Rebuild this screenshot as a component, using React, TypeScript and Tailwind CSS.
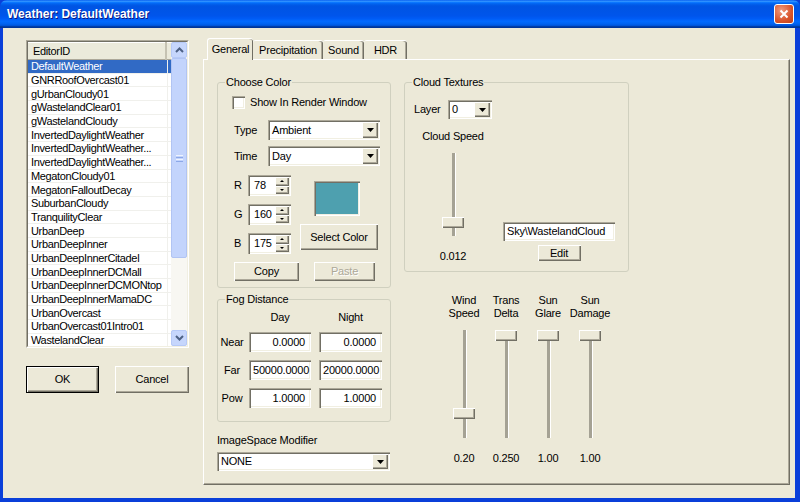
import React from "react";

const raised =
  "bg-[#ECE9D8] shadow-[inset_1px_1px_0_#fff,inset_-1px_-1px_0_#716F64,inset_-2px_-2px_0_#ACA899]";
const sunken =
  "shadow-[inset_1px_1px_0_#ACA899,inset_2px_2px_0_#716F64,inset_-1px_-1px_0_#fff,inset_-2px_-2px_0_#F1EFE2]";

const editorIds = [
  "DefaultWeather",
  "GNRRoofOvercast01",
  "gUrbanCloudy01",
  "gWastelandClear01",
  "gWastelandCloudy",
  "InvertedDaylightWeather",
  "InvertedDaylightWeather...",
  "InvertedDaylightWeather...",
  "MegatonCloudy01",
  "MegatonFalloutDecay",
  "SuburbanCloudy",
  "TranquilityClear",
  "UrbanDeep",
  "UrbanDeepInner",
  "UrbanDeepInnerCitadel",
  "UrbanDeepInnerDCMall",
  "UrbanDeepInnerDCMONtop",
  "UrbanDeepInnerMamaDC",
  "UrbanOvercast",
  "UrbanOvercast01Intro01",
  "WastelandClear",
];

const sliders = [
  { top: "Wind", bottom: "Speed", value: "0.20", thumb: 78 },
  { top: "Trans", bottom: "Delta", value: "0.250", thumb: 0 },
  { top: "Sun", bottom: "Glare", value: "1.00", thumb: 0 },
  { top: "Sun", bottom: "Damage", value: "1.00", thumb: 0 },
];

const DownArrow: React.FC = () => (
  <svg width="7" height="4" viewBox="0 0 7 4">
    <path d="M0 0h7L3.5 4z" fill="#000" />
  </svg>
);

const Button: React.FC<{ label: string; className?: string; disabled?: boolean; isDefault?: boolean }> = ({
  label,
  className = "",
  disabled,
  isDefault,
}) => (
  <div className={`${isDefault ? "border border-black" : ""} ${className}`}>
    <div
      className={`${raised} flex h-full w-full items-center justify-center ${
        disabled ? "text-[#ACA899] [text-shadow:1px_1px_0_#fff]" : ""
      }`}
    >
      {label}
    </div>
  </div>
);

const Combo: React.FC<{ value: string; className?: string }> = ({ value, className = "" }) => (
  <div className={`flex items-stretch bg-white p-[2px] ${sunken} ${className}`}>
    <span className="flex flex-1 items-center overflow-hidden whitespace-nowrap pl-[2px]">{value}</span>
    <span className={`${raised} flex w-[16px] items-center justify-center`}>
      <DownArrow />
    </span>
  </div>
);

const Edit: React.FC<{ value: string; className?: string; left?: boolean }> = ({ value, className = "", left }) => (
  <div
    className={`flex items-center overflow-hidden whitespace-nowrap bg-white ${sunken} ${
      left ? "justify-start pl-[4px]" : "justify-end pr-[6px]"
    } ${className}`}
  >
    {value}
  </div>
);

const Spin: React.FC<{ value: string }> = ({ value }) => (
  <div className={`flex h-[21px] w-[43px] bg-white p-[2px] ${sunken}`}>
    <span className="flex flex-1 items-center pl-[4px]">{value}</span>
    <div className="flex w-[14px] flex-col">
      <span className={`${raised} flex flex-1 items-center justify-center`}>
        <span className="h-0 w-0 border-x-[2px] border-b-[2px] border-x-transparent border-b-black" />
      </span>
      <span className={`${raised} flex flex-1 items-center justify-center`}>
        <span className="h-0 w-0 border-x-[2px] border-t-[2px] border-x-transparent border-t-black" />
      </span>
    </div>
  </div>
);

const VSlider: React.FC<{ height: string; thumb: number }> = ({ height, thumb }) => (
  <div className={`relative flex w-[22px] justify-center ${height}`}>
    <div className="h-full w-[3px] bg-[#A5A294] shadow-[1px_0_0_#fff]" />
    <div className={`absolute left-0 h-[11px] w-[22px] ${raised}`} style={{ top: thumb }} />
  </div>
);

const GroupBox: React.FC<React.PropsWithChildren<{ label: string; className?: string }>> = ({
  label,
  className = "",
  children,
}) => (
  <fieldset className={`rounded-[3px] border border-[#D0D0BF] ${className}`}>
    <legend className="ml-[7px] px-[1px] leading-[13px]">{label}</legend>
    <div className="flex flex-col">{children}</div>
  </fieldset>
);

const ListBox: React.FC = () => (
  <div className="h-[308px] w-[163px] border border-t-[#ACA899] border-l-[#ACA899] border-r-white border-b-white">
    <div className="flex h-full w-full border border-t-[#716F64] border-l-[#716F64] border-r-[#F1EFE2] border-b-[#F1EFE2] bg-white">
      <div className="flex w-[143px] flex-col overflow-hidden tracking-[-0.35px]">
        <div className="flex h-[18px] shrink-0 bg-[#EBEADB] shadow-[inset_0_1px_0_#fff,inset_0_-1px_0_#ACA899]">
          <span className="flex w-[139px] items-center border-r-2 border-r-[#C5C2B2] pl-[5px]">EditorID</span>
        </div>
        {editorIds.map((id, i) => (
          <div
            key={i}
            className={`flex h-[13.7px] shrink-0 border-b border-[#F0F0EC] ${i === 0 ? "bg-[#316AC5] text-white" : ""}`}
          >
            <span className="flex w-[140px] items-center overflow-hidden whitespace-nowrap border-r border-[#F0F0EC] pl-[3px] leading-[12px]">
              {id}
            </span>
          </div>
        ))}
      </div>
      <div className="flex w-[16px] flex-col bg-[#F8F7F2]">
        <div className="flex h-[16px] items-center justify-center rounded-[2px] border border-[#B6C9F7] bg-[#C6D6FC]">
          <svg width="9" height="6" viewBox="0 0 9 6">
            <path d="M1 5l3.5-3.5L8 5" stroke="#4D6185" strokeWidth="2" fill="none" />
          </svg>
        </div>
        <div className="flex h-[200px] items-center justify-center rounded-[2px] border border-[#B1C4F3] bg-[#C3D4FC]">
          <div className="flex flex-col gap-[1px]">
            <span className="h-[1px] w-[7px] bg-[#EEF3FE]" />
            <span className="h-[1px] w-[7px] bg-[#8CA8E8]" />
            <span className="h-[1px] w-[7px] bg-[#EEF3FE]" />
            <span className="h-[1px] w-[7px] bg-[#8CA8E8]" />
          </div>
        </div>
        <div className="flex-1" />
        <div className="flex h-[16px] items-center justify-center rounded-[2px] border border-[#B6C9F7] bg-[#C6D6FC]">
          <svg width="9" height="6" viewBox="0 0 9 6">
            <path d="M1 1l3.5 3.5L8 1" stroke="#4D6185" strokeWidth="2" fill="none" />
          </svg>
        </div>
      </div>
    </div>
  </div>
);

const ChooseColor: React.FC = () => (
  <GroupBox label="Choose Color" className="h-[212px] w-[174px]">
    <div className="ml-[14px] mt-[7px] flex items-center gap-[5px]">
      <span className={`h-[13px] w-[13px] bg-white ${sunken}`} />
      <span className="leading-[13px]">Show In Render Window</span>
    </div>
    <div className="ml-[16px] mt-[11px] flex h-[20px] items-center">
      <span className="w-[34px]">Type</span>
      <Combo value="Ambient" className="h-[20px] w-[112px]" />
    </div>
    <div className="ml-[16px] mt-[6px] flex h-[20px] items-center">
      <span className="w-[34px]">Time</span>
      <Combo value="Day" className="h-[20px] w-[112px]" />
    </div>
    <div className="ml-[16px] mt-[9px] flex">
      <div className="flex flex-col gap-[8px]">
        {[
          ["R", "78"],
          ["G", "160"],
          ["B", "175"],
        ].map(([l, v]) => (
          <div key={l} className="flex h-[21px] items-center">
            <span className="w-[14px]">{l}</span>
            <Spin value={v} />
          </div>
        ))}
      </div>
      <div className="ml-[9px] flex flex-col">
        <div className={`ml-[14px] mt-[6px] h-[35px] w-[46px] p-[2px] ${sunken}`}>
          <div className="h-full w-full bg-[#4EA0AF]" />
        </div>
        <Button label="Select Color" className="mt-[8px] h-[26px] w-[78px]" />
      </div>
    </div>
    <div className="ml-[16px] mt-[8px] flex gap-[15px]">
      <Button label="Copy" className="h-[19px] w-[65px]" />
      <Button label="Paste" disabled className="h-[19px] w-[61px]" />
    </div>
  </GroupBox>
);

const FogDistance: React.FC = () => (
  <GroupBox label="Fog Distance" className="mt-[5px] h-[129px] w-[174px]">
    <div className="mt-[5px] flex leading-[13px]">
      <span className="ml-[31px] w-[62px] text-center">Day</span>
      <span className="ml-[8px] w-[63px] text-center">Night</span>
    </div>
    <div className="mt-[8px] flex flex-col gap-[8px]">
      {[
        ["Near", "0.0000", "0.0000", false],
        ["Far", "50000.0000", "20000.0000", true],
        ["Pow", "1.0000", "1.0000", false],
      ].map(([l, d, n, left]) => (
        <div key={l as string} className="flex h-[20px] items-center">
          <span className="w-[28px] text-center">{l}</span>
          <Edit value={d as string} left={left as boolean} className="ml-[3px] h-[20px] w-[62px]" />
          <Edit value={n as string} left={left as boolean} className="ml-[8px] h-[20px] w-[63px]" />
        </div>
      ))}
    </div>
  </GroupBox>
);

const CloudTextures: React.FC = () => (
  <GroupBox label="Cloud Textures" className="h-[196px] w-[225px]">
    <div className="ml-[9px] mt-[11px] flex h-[19px] items-center">
      <span className="w-[34px]">Layer</span>
      <Combo value="0" className="h-[19px] w-[44px]" />
    </div>
    <div className="flex">
      <div className="ml-[8px] mt-[11px] flex w-[80px] flex-col items-center leading-[13px]">
        <span>Cloud Speed</span>
        <div className="mt-[10px]">
          <VSlider height="h-[83px]" thumb={64} />
        </div>
        <span className="mt-[14px]">0.012</span>
      </div>
      <div className="ml-[10px] mt-[103px] flex flex-col items-center">
        <Edit value="Sky\WastelandCloud" left className="h-[19px] w-[112px]" />
        <Button label="Edit" className="mt-[4px] h-[16px] w-[43px]" />
      </div>
    </div>
  </GroupBox>
);

const Sliders: React.FC = () => (
  <div className="ml-[39px] mt-[22px] flex leading-[13px]">
    {sliders.map((s, i) => (
      <div key={i} className="flex w-[42px] flex-col items-center">
        <span className="text-center">
          {s.top}
          <br />
          {s.bottom}
        </span>
        <div className="mt-[10px]">
          <VSlider height="h-[108px]" thumb={s.thumb} />
        </div>
        <span className="mt-[14px]">{s.value}</span>
      </div>
    ))}
  </div>
);

const TabControl: React.FC = () => (
  <div className="flex w-[587px] flex-col">
    <div className="flex h-[21px] items-end pl-[4px]">
      <div className="relative z-10 -mb-px flex h-[22px] w-[46px] items-center justify-center rounded-t-[3px] border-l border-t border-white bg-[#ECE9D8] shadow-[inset_-1px_0_0_#716F64]">
        General
      </div>
      {[
        ["Precipitation", "w-[70px]"],
        ["Sound", "w-[41px]"],
        ["HDR", "w-[43px]"],
      ].map(([t, w]) => (
        <div
          key={t}
          className={`flex h-[19px] ${w} items-center justify-center rounded-t-[3px] border-t border-white shadow-[inset_-1px_0_0_#716F64,inset_-2px_0_0_#ACA899]`}
        >
          {t}
        </div>
      ))}
    </div>
    <div className="flex h-[426px] border border-t-white border-l-white border-r-[#716F64] border-b-[#716F64] pl-[13px] pt-[16px] shadow-[inset_-1px_-1px_0_#ACA899]">
      <div className="flex w-[174px] flex-col">
        <ChooseColor />
        <FogDistance />
        <span className="mt-[12px] leading-[13px]">ImageSpace Modifier</span>
        <Combo value="NONE" className="mt-[5px] h-[19px] w-[173px]" />
      </div>
      <div className="ml-[13px] flex w-[225px] flex-col">
        <CloudTextures />
        <Sliders />
      </div>
    </div>
  </div>
);

const App: React.FC = () => {
  return (
    <div className="flex h-[502px] w-[800px] flex-col overflow-hidden bg-[#0A3FD9] font-['Liberation_Sans',Arial,sans-serif] text-[11px] tracking-[-0.2px] text-black">
      <div className="flex h-[28px] shrink-0 items-center justify-between rounded-t-[7px] bg-[linear-gradient(#0058EE_0%,#3593FF_4%,#288EFF_6%,#127DFF_8%,#036FFC_10%,#0262EE_14%,#0057E5_20%,#0054E3_24%,#0055EB_56%,#005BF5_66%,#026AFE_76%,#0062EF_86%,#0052D6_92%,#0040AB_94%,#003092_100%)] pl-[7px] pr-[6px]">
        <span className="text-[12px] font-bold tracking-normal text-white [text-shadow:1px_1px_0_#0A1883]">
          Weather: DefaultWeather
        </span>
        <div className="flex h-[20px] w-[20px] items-center justify-center rounded-[3px] border border-white bg-[radial-gradient(circle_at_35%_30%,#F09A7E,#D9542B_60%,#C0401A)]">
          <svg width="10" height="10" viewBox="0 0 10 10">
            <path d="M1.5 1.5l7 7M8.5 1.5l-7 7" stroke="#fff" strokeWidth="2" />
          </svg>
        </div>
      </div>
      <div className="mb-[4px] ml-[3px] mr-[5px] flex flex-1 gap-[14px] bg-[#ECE9D8] pl-[23px] pt-[10px]">
        <div className="flex w-[163px] flex-col pt-[2px]">
          <ListBox />
          <div className="mt-[18px] flex justify-between">
            <Button label="OK" isDefault className="h-[27px] w-[73px]" />
            <Button label="Cancel" className="h-[27px] w-[74px]" />
          </div>
        </div>
        <TabControl />
      </div>
    </div>
  );
};

export default App;
